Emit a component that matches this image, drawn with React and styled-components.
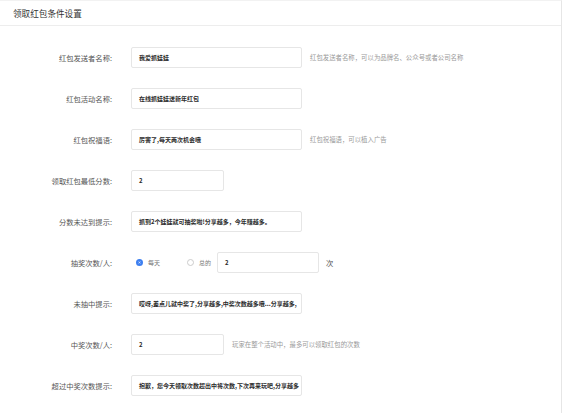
import React from 'react';
import styled, { createGlobalStyle } from 'styled-components';

const Global = createGlobalStyle`
 body {
  margin: 0;
  background: #fff;
  font-family: "Noto Sans CJK SC", "Noto Sans", sans-serif;
 }
`;

const rows = [
 { label: '红包发送者名称:', value: '我爱抓娃娃', hint: '红包发送者名称，可以为品牌名、公众号或者公司名称' },
 { label: '红包活动名称:', value: '在线抓娃娃送新年红包' },
 { label: '红包祝福语:', value: '厉害了,每天两次机会哦', hint: '红包祝福语，可以植入广告' },
 { label: '领取红包最低分数:', value: '2', small: true },
 { label: '分数未达到提示:', value: '抓到2个娃娃就可抽奖啦!分享越多，今年赚越多。' },
 { label: '抽奖次数/人:', radio: true, value: '2' },
 { label: '未抽中提示:', value: '哎呀,差点儿就中奖了,分享越多,中奖次数越多哦...分享越多,' },
 { label: '中奖次数/人:', value: '2', small: true, hint: '玩家在整个活动中，最多可以领取红包的次数' },
 { label: '超过中奖次数提示:', value: '抱歉，您今天领取次数超出中将次数,下次再来玩吧,分享越多' },
];

const App = () => {
 return (
  <Styled_Card>
   <Global />
   <Styled_Header>领取红包条件设置</Styled_Header>
   <Styled_Form>
    {rows.map((r) => (
     <Styled_Row key={r.label}>
      <Styled_Label>{r.label}</Styled_Label>
      {r.radio ? (
       <>
        <Styled_Radio space={22}>
         <Styled_Dot checked />
         每天
        </Styled_Radio>
        <Styled_Radio space={6}>
         <Styled_Dot />
         总的
        </Styled_Radio>
        <Styled_Input width={102}>{r.value}</Styled_Input>
        <Styled_Unit>次</Styled_Unit>
       </>
      ) : (
       <Styled_Input width={r.small ? 93 : 171}>{r.value}</Styled_Input>
      )}
      {r.hint && <Styled_Hint>{r.hint}</Styled_Hint>}
     </Styled_Row>
    ))}
   </Styled_Form>
  </Styled_Card>
 );
};

const Styled_Card = styled.div`
 width: 562px;
 min-height: 413px;
 border-top: 1px solid #f2f2f2;
 border-right: 1px solid #e6e6e6;
 box-sizing: border-box;
`;
const Styled_Header = styled.div`
 height: 24px;
 padding-left: 13px;
 display: flex;
 align-items: center;
 font-size: 8.6px;
 color: #333;
 border-bottom: 1px solid #ededed;
`;
const Styled_Form = styled.div`
 padding-top: 11px;
 display: flex;
 flex-direction: column;
`;
const Styled_Row = styled.div`
 height: 41px;
 display: flex;
 align-items: center;
`;
const Styled_Label = styled.div`
 width: 112px;
 margin-right: 19px;
 text-align: right;
 font-size: 7.3px;
 color: #555;
 white-space: nowrap;
`;
const Styled_Input = styled.div`
 width: ${(p) => p.width}px;
 height: 21px;
 box-sizing: border-box;
 border: 1px solid #e6e6e6;
 border-radius: 2px;
 padding-left: 7px;
 display: flex;
 align-items: center;
 font-size: 6px;
 font-weight: 700;
 color: #2a2a2a;
 white-space: nowrap;
 overflow: hidden;
`;
const Styled_Radio = styled.label`
 display: flex;
 align-items: center;
 gap: 5px;
 margin-left: 5px;
 margin-right: ${(p) => p.space}px;
 font-size: 6px;
 color: #777;
`;
const Styled_Dot = styled.span`
 width: 7px;
 height: 7px;
 box-sizing: border-box;
 border-radius: 50%;
 border: ${(p) => (p.checked ? '2px solid #3d7ff0' : '1px solid #ccc')};
 background: #fff;
 box-shadow: ${(p) => (p.checked ? 'inset 0 0 0 1px #3d7ff0' : 'none')};
`;
const Styled_Unit = styled.span`
 margin-left: 7px;
 font-size: 7.3px;
 color: #555;
`;
const Styled_Hint = styled.span`
 margin-left: 8px;
 font-size: 6.4px;
 color: #999;
 white-space: nowrap;
`;

export default App;
